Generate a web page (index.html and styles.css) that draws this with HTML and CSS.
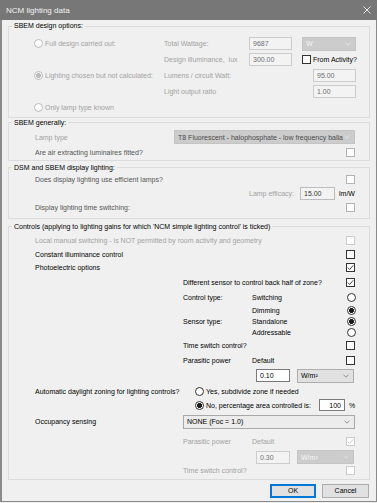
FILE: index.html
```html
<!DOCTYPE html>
<html>
<head>
<meta charset="utf-8">
<link rel="stylesheet" href="styles.css">
</head>
<body>
<div class="window">
  <div class="titlebar">
    <span class="title">NCM lighting data</span>
    <svg class="close" width="8" height="8" viewBox="0 0 8 8"><path d="M0.5 0.5L7.5 7.5M7.5 0.5L0.5 7.5" stroke="#f4f4f4" stroke-width="0.9" fill="none"/></svg>
  </div>
  <div class="content">

    <fieldset class="group">
      <legend>SBEM design options:</legend>
      <div class="grid g1">
        <label class="c1 opt dis"><span class="rb dis"></span>Full design carried out:</label>
        <span class="c2 dis">Total Wattage:</span>
        <span class="c3 field ro w43">9687</span>
        <span class="c4 combo off w54">W<svg class="chev" width="6" height="4" viewBox="0 0 6 4"><path d="M0.5 0.8L3 3.2L5.5 0.8" stroke="#e8e8e8" stroke-width="0.8" fill="none"/></svg></span>

        <span class="c2 dis">Design illuminance,&nbsp; lux</span>
        <span class="c3 field ro w43">300.00</span>
        <label class="c4 opt"><span class="cb"></span>From Activity?</label>

        <label class="c1 opt dis"><span class="rb dis on-dis"></span>Lighting chosen but not calculated:</label>
        <span class="c2 dis">Lumens / circuit Watt:</span>
        <span class="c4 field ro w43 end">95.00</span>

        <span class="c2 dis">Light output ratio</span>
        <span class="c4 field ro w43 end">1.00</span>

        <label class="c1 opt dis"><span class="rb dis"></span>Only lamp type known</label>
      </div>
    </fieldset>

    <fieldset class="group">
      <legend>SBEM generally:</legend>
      <div class="grid g2">
        <span class="c1 dis">Lamp type</span>
        <span class="c2 combo off lamp">T8 Fluorescent - halophosphate - low frequency balla<svg class="chev" width="6" height="4" viewBox="0 0 6 4"><path d="M0.5 0.8L3 3.2L5.5 0.8" stroke="#e8e8e8" stroke-width="0.8" fill="none"/></svg></span>
        <span class="c1 dim">Are air extracting luminaires fitted?</span>
        <span class="c2 cb mid end"></span>
      </div>
    </fieldset>

    <fieldset class="group gap2">
      <legend>DSM and SBEM display lighting:</legend>
      <div class="grid g3">
        <span class="c1 dim">Does display lighting use efficient lamps?</span>
        <span class="c4 cb mid end"></span>
        <span class="c2 dis">Lamp efficacy:</span>
        <span class="c3 field ro2 w35">15.00</span>
        <span class="c4 dis unit">lm/W</span>
        <span class="c1 dim">Display lighting time switching:</span>
        <span class="c4 cb mid end"></span>
      </div>
    </fieldset>

    <fieldset class="group gap3">
      <legend>Controls (applying to lighting gains for which 'NCM simple lighting control' is ticked)</legend>
      <div class="grid g4">
        <span class="c1 s4 dis">Local manual switching - is NOT permitted by room activity and geometry</span>
        <span class="c5 cb dis"></span>

        <span class="c1 s4">Constant illuminance control</span>
        <span class="c5 cb"></span>

        <span class="c1 s4">Photoelectric options</span>
        <span class="c5 cb"><svg width="7" height="7" viewBox="0 0 7 7"><path d="M0.8 3.6L2.7 5.5L6.2 1.3" stroke="#333" stroke-width="0.9" fill="none"/></svg></span>

        <span class="c2 s3">Different sensor to control back half of zone?</span>
        <span class="c5 cb"><svg width="7" height="7" viewBox="0 0 7 7"><path d="M0.8 3.6L2.7 5.5L6.2 1.3" stroke="#333" stroke-width="0.9" fill="none"/></svg></span>

        <span class="c2">Control type:</span>
        <span class="c3">Switching</span>
        <span class="c5 rb"></span>

        <span class="c3">Dimming</span>
        <span class="c5 rb on"></span>

        <span class="c2">Sensor type:</span>
        <span class="c3">Standalone</span>
        <span class="c5 rb on"></span>

        <span class="c3">Addressable</span>
        <span class="c5 rb"></span>

        <span class="c2">Time switch control?</span>
        <span class="c5 cb"></span>

        <span class="c2">Parasitic power</span>
        <span class="c3">Default</span>
        <span class="c5 cb"></span>

        <span class="c3 field w34 in4">0.10</span>
        <span class="c4 s2 combo w57">W/m²<svg class="chev" width="6" height="4" viewBox="0 0 6 4"><path d="M0.5 0.8L3 3.2L5.5 0.8" stroke="#777" stroke-width="0.8" fill="none"/></svg></span>

        <span class="c1">Automatic daylight zoning for lighting controls?</span>
        <label class="c2 s4 opt ind"><span class="rb"></span>Yes, subdivide zone if needed</label>

        <div class="c2 s4 pct">
          <label class="opt ind"><span class="rb on"></span>No, percentage area controlled is:</label>
          <span class="field w26 num">100</span>
          <span class="unit">%</span>
        </div>

        <span class="c1">Occupancy sensing</span>
        <span class="c2 s4 combo plain w172">NONE (Foc = 1.0)<svg class="chev" width="6" height="4" viewBox="0 0 6 4"><path d="M0.5 0.8L3 3.2L5.5 0.8" stroke="#777" stroke-width="0.8" fill="none"/></svg></span>

        <span class="c2 dis">Parasitic power</span>
        <span class="c3 dis">Default</span>
        <span class="c5 cb dis"><svg width="7" height="7" viewBox="0 0 7 7"><path d="M0.8 3.6L2.7 5.5L6.2 1.3" stroke="#c4c4c4" stroke-width="0.9" fill="none"/></svg></span>

        <span class="c3 field ro w34 in4">0.30</span>
        <span class="c4 s2 combo off w57">W/m²<svg class="chev" width="6" height="4" viewBox="0 0 6 4"><path d="M0.5 0.8L3 3.2L5.5 0.8" stroke="#e8e8e8" stroke-width="0.8" fill="none"/></svg></span>

        <span class="c2 dis">Time switch control?</span>
        <span class="c5 cb dis"></span>
      </div>
    </fieldset>

    <div class="buttons">
      <button class="btn default">OK</button>
      <button class="btn">Cancel</button>
    </div>
  </div>
</div>
</body>
</html>
```

FILE: styles.css
```css
* { box-sizing: border-box; }
html, body { margin: 0; padding: 0; }
body {
  background: #f0f0f0;
  font-family: "Liberation Sans", Arial, sans-serif;
  font-size: 7px;
  color: #000;
}
.window {
  width: 377px;
  height: 502px;
  border: 1px solid #8a8a8a;
  border-left-width: 2px;
  border-top: 0;
  background: #f0f0f0;
  display: flex;
  flex-direction: column;
}
.titlebar {
  height: 20px;
  background: #777777;
  color: #f4f4f4;
  display: flex;
  align-items: center;
  justify-content: space-between;
  margin-left: -2px;
  margin-right: -1px;
  padding: 0 6px 0 6px;
  font-size: 8px;
  flex: none;
}
.content {
  display: flex;
  flex-direction: column;
  padding: 1px 6px 0 6px;
}
.group {
  margin: 0;
  border: 1px solid #dcdcdc;
  padding: 0 13px 0 3px;
  min-width: 0;
}
.group legend {
  padding: 0 2px;
  line-height: 10px;
  height: 10px;
  color: #000;
}
.gap2 { margin-top: 2px; padding-bottom: 3px; }
.gap3 { margin-top: 3px; padding-bottom: 3px; }
.group:first-child { padding-bottom: 2px; }

.grid {
  display: grid;
  align-items: center;
  margin-left: 23px;
  white-space: nowrap;
  line-height: 9px;
}
.g1 {
  margin-top: 5px;
  grid-template-columns: 129px 85px 53px 54px;
  grid-auto-rows: 15.8px;
}
.g2 {
  margin-top: 2px;
  grid-template-columns: 139px 182px;
  grid-auto-rows: 15px;
}
.g3 {
  grid-template-columns: 214px 51px 39px 17px;
  grid-template-rows: 14px 13px 15px;
}
.g4 {
  margin-top: 2px;
  grid-template-columns: 148px 69px 45px 50px 9px;
  grid-template-rows: 14px 13px 14px 15px 15px 11px 11px 11px 16px 14px 16px 16px 11px 22px 17px 15px 11px;
}
.c1 { grid-column-start: 1; }
.c2 { grid-column-start: 2; }
.c3 { grid-column-start: 3; }
.c4 { grid-column-start: 4; }
.c5 { grid-column-start: 5; }
.s2 { grid-column-end: span 2; }
.s3 { grid-column-end: span 3; }
.s4 { grid-column-end: span 4; }
.end { justify-self: end; }

.dis { color: #a2a2a2; }
.dim { color: #555555; }

.opt {
  display: flex;
  align-items: center;
  gap: 2px;
}
.g1 .opt.c1 { margin-left: -1px; }
.ind { margin-left: 12px; }

.cb {
  width: 9px;
  height: 9px;
  border: 1px solid #333;
  background: #fff;
  display: inline-flex;
  align-items: center;
  justify-content: center;
  flex: none;
}
.c5.cb, .g3 .cb, .g2 .cb { margin-right: 1px; }
.c5.cb { justify-self: end; }
.cb.dis { border-color: #cccccc; }
.cb.mid { border-color: #b4b4b4; }

.rb {
  width: 9px;
  height: 9px;
  border-radius: 50%;
  border: 1px solid #333;
  background: #fff;
  display: inline-block;
  flex: none;
}
.c5.rb { justify-self: end; margin-right: 0; }
.rb.dis { border-color: #bcbcbc; }
.rb.on { background: radial-gradient(circle, #1a1a1a 0 2.2px, #fff 2.7px); }
.rb.on-dis { background: radial-gradient(circle, #bcbcbc 0 2.2px, #fff 2.7px); }

.field {
  height: 13px;
  border: 1px solid #7a7a7a;
  background: #fff;
  padding: 0 3px;
  display: flex;
  align-items: center;
  color: #000;
}
.field.ro { background: #f3f3f3; border-color: #cccccc; color: #707070; }
.field.ro2 { background: #f3f3f3; border-color: #bdbdbd; color: #333; }
.num { justify-content: flex-end; }
.w43 { width: 43px; }
.w35 { width: 35px; }
.w34 { width: 34px; }
.w26 { width: 26px; }
.in4 { margin-left: 4px; }
.unit { margin-left: 4px; color: inherit; }
.g3 .unit { margin-left: 0; }

.combo {
  height: 14px;
  border: 1px solid #adadad;
  background: #e1e1e1;
  display: flex;
  align-items: center;
  justify-content: space-between;
  padding: 0 4px 0 3px;
  overflow: hidden;
}
.combo.off { background: #cccccc; border-color: #c4c4c4; color: #f6f6f6; }
.combo.lamp { color: #4a4a4a; width: 181px; }
.combo.plain { background: #ececec; border-color: #a8a8a8; }
.w54 { width: 54px; }
.w57 { width: 57px; }
.w172 { width: 172px; }
.chev { flex: none; }

.pct {
  display: flex;
  align-items: center;
}
.pct .opt { width: 124px; }
.pct .field { height: 12px; }

.buttons {
  display: flex;
  justify-content: flex-end;
  gap: 6px;
  margin-top: 4px;
  padding-right: 1px;
}
.btn {
  height: 14px;
  width: 47px;
  border: 1px solid #adadad;
  background: #e1e1e1;
  font-family: inherit;
  font-size: 7px;
  color: #000;
  padding: 0;
  margin: 0;
}
.btn.default {
  width: 46px;
  border-color: #0078d7;
  box-shadow: inset 0 0 0 1px #0078d7;
}
```
